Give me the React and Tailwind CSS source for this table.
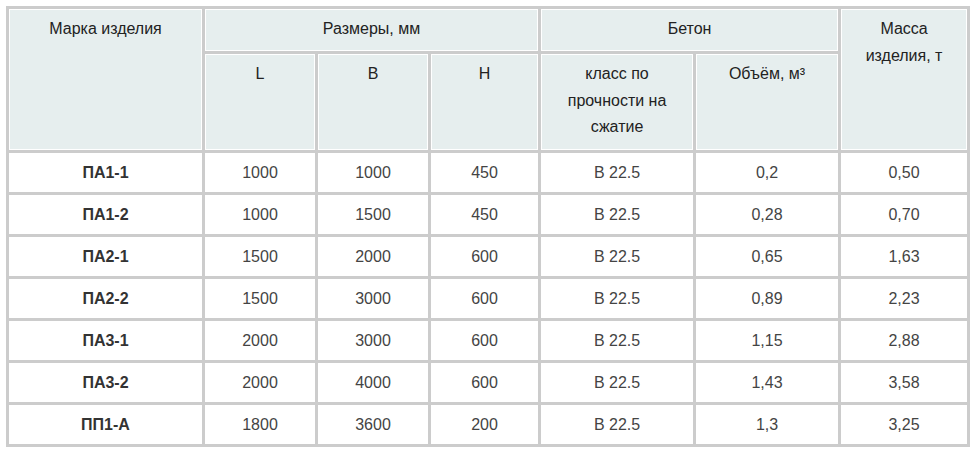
import React from 'react';

const rows = [
  ['ПА1-1', '1000', '1000', '450', 'B 22.5', '0,2', '0,50'],
  ['ПА1-2', '1000', '1500', '450', 'B 22.5', '0,28', '0,70'],
  ['ПА2-1', '1500', '2000', '600', 'B 22.5', '0,65', '1,63'],
  ['ПА2-2', '1500', '3000', '600', 'B 22.5', '0,89', '2,23'],
  ['ПА3-1', '2000', '3000', '600', 'B 22.5', '1,15', '2,88'],
  ['ПА3-2', '2000', '4000', '600', 'B 22.5', '1,43', '3,58'],
  ['ПП1-А', '1800', '3600', '200', 'B 22.5', '1,3', '3,25'],
];

const th = 'bg-[#e6eeee] shadow-[inset_0_0_0_1px_#fff] align-top font-normal text-[#222] px-[15px] pt-[7px] leading-[26.5px]';

export default function App() {
  return (
    <div className="bg-white w-[975px] h-[453px] pt-[6px] pl-[6px] font-['Liberation_Sans',Arial,sans-serif] text-[16px]">
      <table className="table-fixed w-[964px] bg-[#cccccc] border-separate border-spacing-[3px]">
        <colgroup>
          <col className="w-[193px]" />
          <col className="w-[110px]" />
          <col className="w-[110px]" />
          <col className="w-[107px]" />
          <col className="w-[152px]" />
          <col className="w-[142px]" />
          <col className="w-[126px]" />
        </colgroup>
        <thead>
          <tr className="h-[42px]">
            <th rowSpan={2} className={th}>Марка изделия</th>
            <th colSpan={3} className={th}>Размеры, мм</th>
            <th colSpan={2} className={th}>Бетон</th>
            <th rowSpan={2} className={th}>Масса изделия, т</th>
          </tr>
          <tr className="h-[96px]">
            <th className={th}>L</th>
            <th className={th}>B</th>
            <th className={th}>H</th>
            <th className={th}>класс по прочности на сжатие</th>
            <th className={th}>Объём, м³</th>
          </tr>
        </thead>
        <tbody>
          {rows.map((r) => (
            <tr key={r[0]} className="h-[39px]">
              {r.map((c, i) => (
                <td
                  key={i}
                  className={
                    i === 0
                      ? 'bg-white text-center align-middle font-bold text-[#333] p-0'
                      : 'bg-white text-center align-middle text-[#444] p-0'
                  }
                >
                  {c}
                </td>
              ))}
            </tr>
          ))}
        </tbody>
      </table>
    </div>
  );
}
